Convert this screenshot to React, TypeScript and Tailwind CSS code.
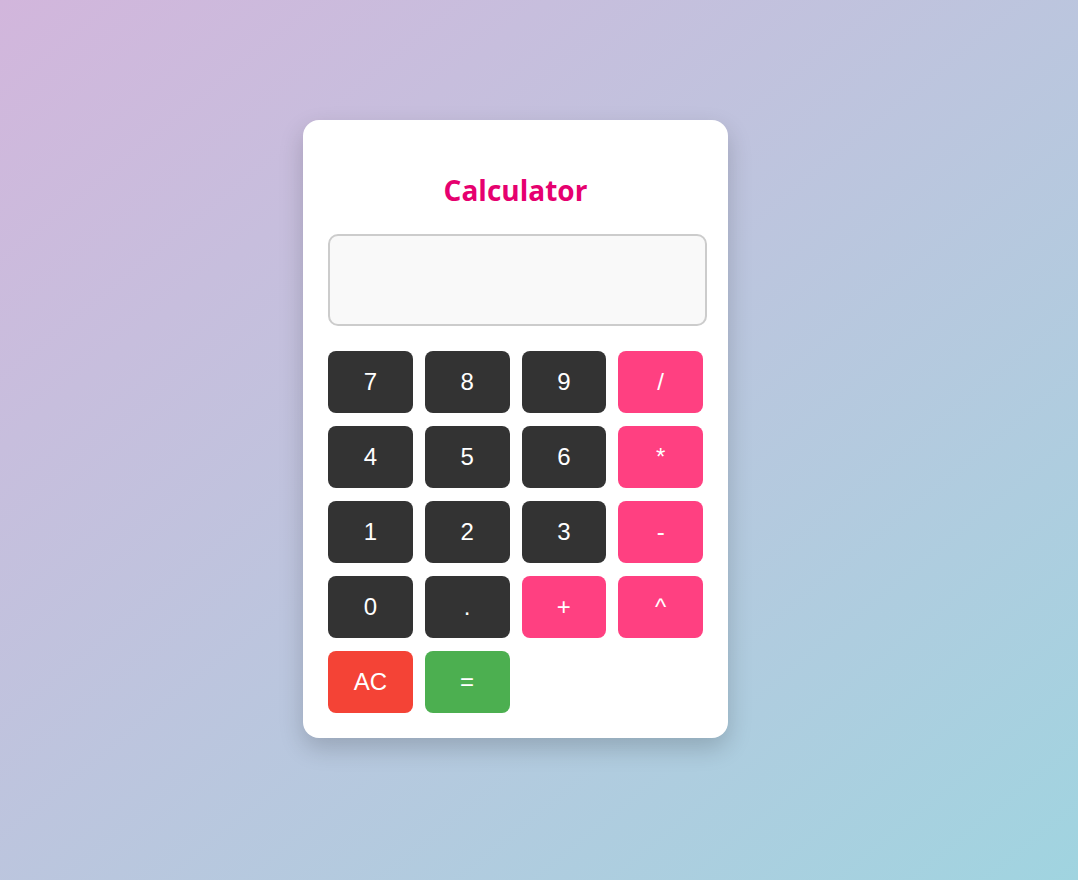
const keys = [
  { label: '7', kind: 'num' },
  { label: '8', kind: 'num' },
  { label: '9', kind: 'num' },
  { label: '/', kind: 'op' },
  { label: '4', kind: 'num' },
  { label: '5', kind: 'num' },
  { label: '6', kind: 'num' },
  { label: '*', kind: 'op' },
  { label: '1', kind: 'num' },
  { label: '2', kind: 'num' },
  { label: '3', kind: 'num' },
  { label: '-', kind: 'op' },
  { label: '0', kind: 'num' },
  { label: '.', kind: 'num' },
  { label: '+', kind: 'op' },
  { label: '^', kind: 'op' },
  { label: 'AC', kind: 'clear' },
  { label: '=', kind: 'equals' },
]

const kindClass: Record<string, string> = {
  num: 'bg-[#333333]',
  op: 'bg-[#ff4081]',
  clear: 'bg-[#f44336]',
  equals: 'bg-[#4caf50]',
}

export default function App() {
  return (
    <div className="min-h-[880px] w-full bg-gradient-to-br from-[#d2b6dc] to-[#a0d4e0] flex justify-center items-start pt-[120px] pr-[47px]">
      <div className="w-[425px] bg-white rounded-2xl shadow-[0_10px_25px_rgba(0,0,0,0.18)] p-[25px]">
        <h1 className="h-[89px] flex items-center justify-center text-[28px] font-bold text-[#e6006f] font-['Open_Sans',sans-serif]">
          Calculator
        </h1>
        <div className="w-[379px] h-[92px] bg-[#f9f9f9] border-2 border-[#cccccc] rounded-[10px] mb-[25px]"></div>
        <div className="grid grid-cols-4 gap-x-3 gap-y-[13px]">
          {keys.map((k) => (
            <button
              key={k.label}
              className={`h-[62px] rounded-lg text-white text-[24px] font-['Liberation_Sans',Arial,sans-serif] ${kindClass[k.kind]}`}
            >
              {k.label}
            </button>
          ))}
        </div>
      </div>
    </div>
  )
}
